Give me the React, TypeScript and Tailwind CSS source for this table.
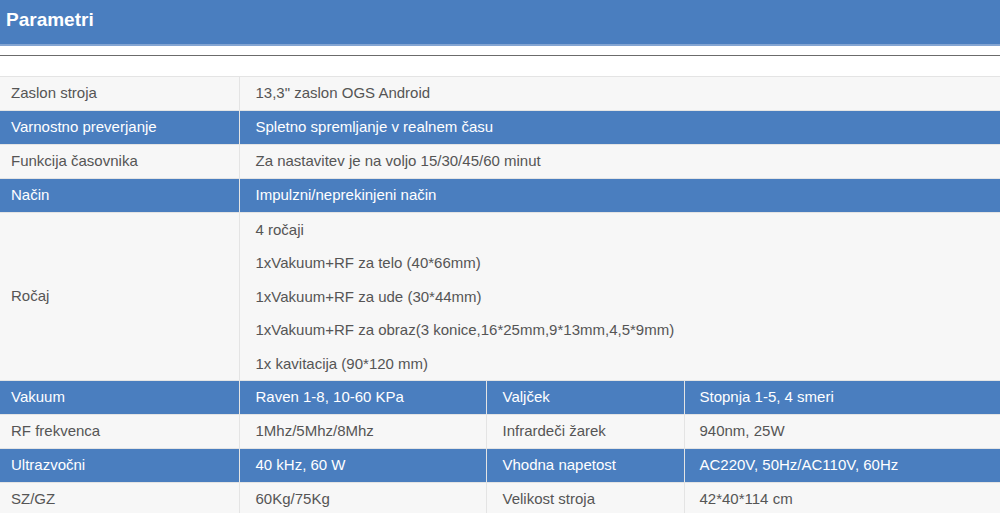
import React from "react";

const BLUE = "bg-[#4a7ebf] text-white";
const GRAY = "bg-[#f7f7f7] text-[#555]";

interface Row {
  label: string;
  value: string;
  blue: boolean;
}

const TOP_ROWS: Row[] = [
  { label: "Zaslon stroja", value: "13,3\" zaslon OGS Android", blue: false },
  { label: "Varnostno preverjanje", value: "Spletno spremljanje v realnem času", blue: true },
  { label: "Funkcija časovnika", value: "Za nastavitev je na voljo 15/30/45/60 minut", blue: false },
  { label: "Način", value: "Impulzni/neprekinjeni način", blue: true },
];

const HANDLES = [
  "4 ročaji",
  "1xVakuum+RF za telo (40*66mm)",
  "1xVakuum+RF za ude (30*44mm)",
  "1xVakuum+RF za obraz(3 konice,16*25mm,9*13mm,4,5*9mm)",
  "1x kavitacija (90*120 mm)",
];

const QUAD_ROWS: { cells: string[]; blue: boolean }[] = [
  { cells: ["Vakuum", "Raven 1-8, 10-60 KPa", "Valjček", "Stopnja 1-5, 4 smeri"], blue: true },
  { cells: ["RF frekvenca", "1Mhz/5Mhz/8Mhz", "Infrardeči žarek", "940nm, 25W"], blue: false },
  { cells: ["Ultrazvočni", "40 kHz, 60 W", "Vhodna napetost", "AC220V, 50Hz/AC110V, 60Hz"], blue: true },
  { cells: ["SZ/GZ", "60Kg/75Kg", "Velikost stroja", "42*40*114 cm"], blue: false },
];

const cell = "border border-[#e4e4e4] h-[34px] px-4 align-middle";
const first = "border border-l-0 border-[#e4e4e4] h-[34px] pl-[11px] pr-4 align-middle";

export default function App() {
  return (
    <div className="w-[1000px] h-[513px] overflow-hidden bg-white font-['Liberation_Sans',Arial,sans-serif] text-[15px]">
      {/* Header */}
      <div className="h-[46px] bg-[#4a7ebf] border-b-2 border-[#84a5d2] flex items-center px-[6px]">
        <h2 className="text-white font-bold text-[19px] -mt-[4px]">Parametri</h2>
      </div>
      <div className="h-[9px]" />
      <div className="h-px bg-[#6b6b6b]" />
      <div className="h-[20px]" />

      <table className="w-[1001px] border-collapse table-fixed">
        <colgroup>
          <col className="w-[239px]" />
          <col className="w-[247px]" />
          <col className="w-[198px]" />
          <col className="w-[317px]" />
        </colgroup>
        <tbody>
          {TOP_ROWS.map(r => (
            <tr key={r.label} className={r.blue ? BLUE : GRAY}>
              <td className={first}>{r.label}</td>
              <td className={cell} colSpan={3}>{r.value}</td>
            </tr>
          ))}
          <tr className={GRAY}>
            <td className={first}>Ročaj</td>
            <td className="border border-[#e4e4e4] px-4 py-0 align-middle" colSpan={3}>
              {HANDLES.map(h => (
                <p key={h} className="leading-[33.4px]">{h}</p>
              ))}
            </td>
          </tr>
          {QUAD_ROWS.map(r => (
            <tr key={r.cells[0]} className={r.blue ? BLUE : GRAY}>
              <td className={first}>{r.cells[0]}</td>
              <td className={cell}>{r.cells[1]}</td>
              <td className={cell}>{r.cells[2]}</td>
              <td className={`${cell} !pl-[15px]`}>{r.cells[3]}</td>
            </tr>
          ))}
        </tbody>
      </table>
    </div>
  );
}
